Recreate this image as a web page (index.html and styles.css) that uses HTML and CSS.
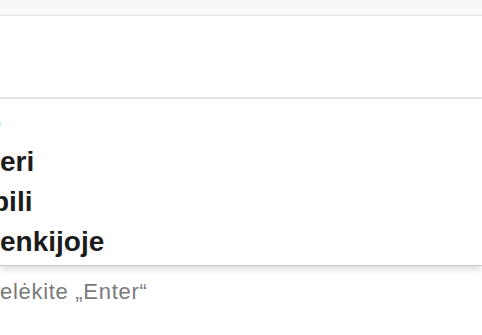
FILE: index.html
```html
<!DOCTYPE html>
<html lang="lt">

<head>
    <meta charset="UTF-8">
    <meta name="viewport" content="width=device-width, initial-scale=1.0">
    <title>Paieška</title>
    <link rel="stylesheet" href="styles.css">
</head>

<body>
    <!-- Top bar -->
    <div class="topbar"></div>

    <!-- Search field -->
    <div class="search-box"></div>

    <!-- Suggestions -->
    <ul class="suggestions">
        <li class="cut-more">s</li>
        <li>eri</li>
        <li class="cut">bili</li>
        <li>enkijoje</li>
    </ul>

    <!-- Hint -->
    <p class="hint">elėkite „Enter“</p>
</body>

</html>
```

FILE: styles.css
```css
/* General Styles */
* {
    margin: 0;
    padding: 0;
    box-sizing: border-box;
}

body {
    font-family: "Liberation Sans", Arial, sans-serif;
    background-color: #ffffff;
    overflow: hidden;
}

/* Top bar */
.topbar {
    height: 16px;
    background-color: #f8f8f8;
    border-bottom: 1px solid #e4e4e4;
}

/* Search field */
.search-box {
    height: 83px;
    background-color: #ffffff;
    border-bottom: 2px solid #e6e6e6;
}

/* Suggestions dropdown */
.suggestions {
    list-style: none;
    padding: 3px 0;
    background-color: #ffffff;
    border-bottom: 1px solid #c8c8c8;
    box-shadow: 0 4px 6px rgba(0, 0, 0, 0.12);
}

.suggestions li {
    height: 40px;
    line-height: 40px;
    font-size: 28px;
    font-weight: bold;
    color: #1c1c1c;
    white-space: nowrap;
}

.suggestions .cut {
    text-indent: -8px;
}

/* only the last sliver of this row shows */
.suggestions .cut-more {
    line-height: 34px;
    text-indent: -14px;
    color: #a9b6c8;
}

/* Hint text */
.hint {
    margin-top: 13px;
    font-size: 22px;
    line-height: 26px;
    color: #7a7a7a;
    letter-spacing: 0.7px;
}
```
